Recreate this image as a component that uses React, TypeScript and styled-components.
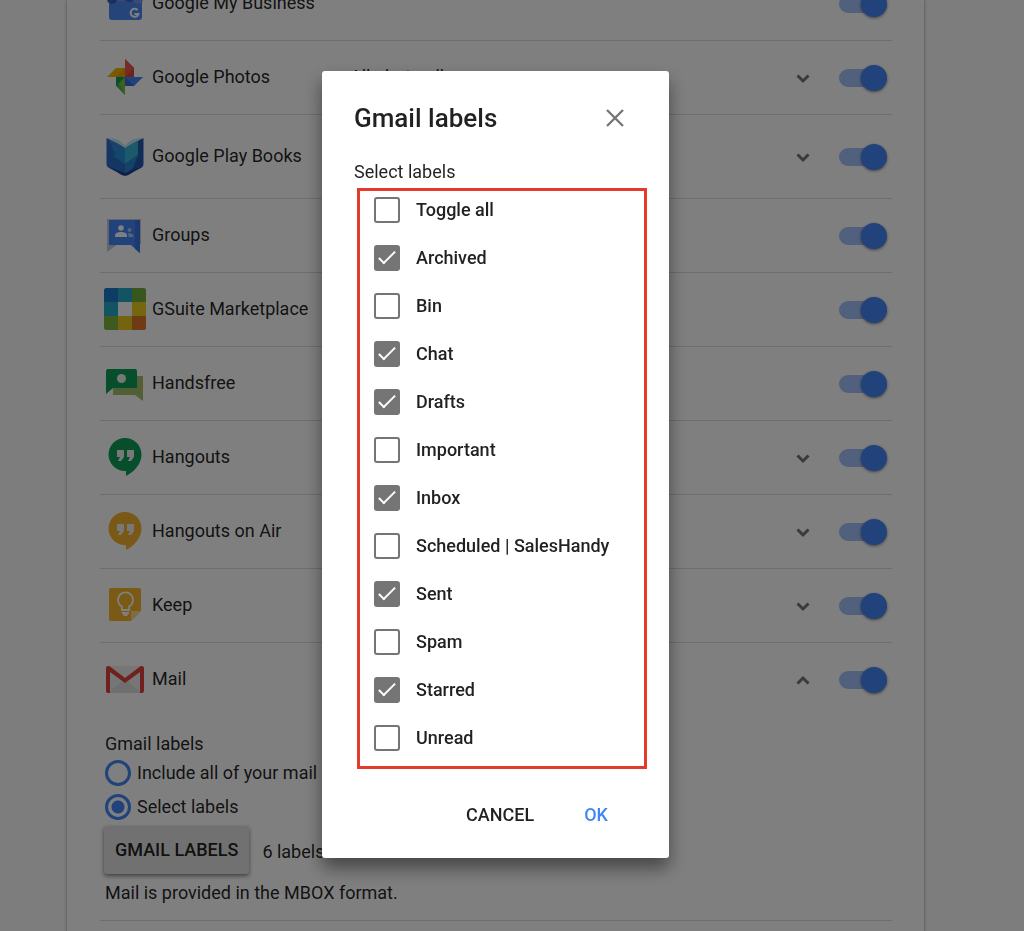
import React from 'react';
import styled, { createGlobalStyle, css } from 'styled-components';

const GlobalStyle = createGlobalStyle`
  *, *::before, *::after { box-sizing: border-box; }
  html, body { margin: 0; height: 100%; }
  body {
    background: #fafafa;
    color: rgba(0, 0, 0, 0.87);
    font-family: Roboto, 'Liberation Sans', sans-serif;
    font-size: 18px;
    line-height: 24px;
  }
  button, input { font: inherit; color: inherit; }
`;

const Page = styled.div`
  height: 100vh;
  overflow: hidden;
  padding-right: 33px;
`;

const Card = styled.main`
  display: flow-root;
  max-width: 857px;
  min-height: 110%;
  margin: 0 auto;
  padding: 0 32px 0 33px;
  background: #fff;
  box-shadow: 0 0 3px rgba(0, 0, 0, 0.4);
`;

/* The list is shown scrolled part-way into its first entry. */
const ProductList = styled.ul`
  list-style: none;
  margin: -33px 0 0;
  padding: 0;
`;

const ProductItem = styled.li`
  border-bottom: 1px solid #dcdcdc;
`;

const ProductRow = styled.div<{ $tall?: boolean }>`
  display: flex;
  align-items: center;
  height: ${(p) => (p.$tall ? 83 : 73)}px;
  padding: 0 5px 2px 4px;
`;

const Logo = styled.svg`
  width: 42px;
  height: 42px;
  margin-right: 6px;
  flex: none;
`;

const Name = styled.span`
  width: 198px;
  flex: none;
`;

const Summary = styled.span`
  flex: 1;
`;

const Expander = styled.button`
  display: flex;
  padding: 2px 0 0;
  border: 0;
  background: none;
  color: #757575;
  margin-right: 24px;
  svg { width: 24px; height: 24px; }
`;

const Switch = styled.input`
  appearance: none;
  position: relative;
  flex: none;
  width: 48px;
  height: 26px;
  margin: 2px 0 0;
  &::before {
    content: '';
    position: absolute;
    left: 0;
    top: 4px;
    width: 46px;
    height: 18px;
    border-radius: 9px;
    background: #a1c0fa;
  }
  &::after {
    content: '';
    position: absolute;
    right: 0;
    top: 0;
    width: 26px;
    height: 26px;
    border-radius: 50%;
    background: #4285f4;
    box-shadow: 0 1px 3px rgba(0, 0, 0, 0.5);
  }
`;

const Details = styled.section`
  padding: 16px 5px 15px;
`;

const Fieldset = styled.fieldset`
  border: 0;
  margin: 0;
  padding: 0;
`;

const Legend = styled.legend`
  padding: 0;
`;

const RadioLabel = styled.label`
  display: flex;
  align-items: center;
  gap: 6px;
  height: 34px;
`;

const Radio = styled.input`
  appearance: none;
  flex: none;
  width: 26px;
  height: 26px;
  margin: 0;
  border: 3px solid #4285f4;
  border-radius: 50%;
  &:checked {
    background: radial-gradient(circle, #4285f4 6px, transparent 7px);
  }
`;

const ButtonLine = styled.div`
  display: flex;
  align-items: center;
  gap: 13px;
  margin: 2px 0 7px;
`;

const RaisedButton = styled.button`
  height: 48px;
  padding: 0 11px;
  margin-left: -1px;
  border: 0;
  border-radius: 3px;
  background: #e3e3e3;
  font-weight: 500;
  box-shadow: 0 2px 4px rgba(0, 0, 0, 0.5);
`;

const Count = styled.span`
  padding-top: 4px;
`;

const Note = styled.p`
  margin: 0;
`;

const Scrim = styled.div`
  position: fixed;
  inset: 0;
  display: flex;
  align-items: center;
  justify-content: center;
  padding: 0 33px 2px 0;
  background: rgba(0, 0, 0, 0.5);
`;

const Dialog = styled.div`
  width: 347px;
  padding: 32px 32px 25px;
  border-radius: 3px;
  background: #fff;
  box-shadow: 0 10px 18px rgba(0, 0, 0, 0.45);
`;

const DialogHeader = styled.header`
  display: flex;
  align-items: center;
  justify-content: space-between;
  height: 30px;
  padding-right: 10px;
  margin-bottom: 27px;
`;

const Title = styled.h2`
  margin: 0;
  font-size: 26px;
  line-height: 30px;
  font-weight: 500;
`;

const CloseButton = styled.button`
  display: flex;
  padding: 0;
  border: 0;
  background: none;
  color: #757575;
  svg { width: 24px; height: 24px; }
`;

const LabelBox = styled.div`
  display: flex;
  flex-direction: column;
  gap: 22px;
  margin: 4px -10px 0 3px;
  padding: 6px 14px 15px;
  border: 3px solid #e5392c;
`;

const CheckLabel = styled.label`
  display: flex;
  align-items: center;
  gap: 16px;
  height: 26px;
  font-weight: 500;
`;

const tick = css`
  &:checked { background: #757575; }
  &:checked::after {
    content: '';
    position: absolute;
    left: 7px;
    top: 0;
    width: 8px;
    height: 17px;
    border: solid #fff;
    border-width: 0 2px 2px 0;
    transform: rotate(45deg);
  }
`;

const Checkbox = styled.input`
  appearance: none;
  position: relative;
  flex: none;
  width: 26px;
  height: 26px;
  margin: 0;
  border: 2px solid #757575;
  border-radius: 3px;
  ${tick}
`;

const Actions = styled.footer`
  display: flex;
  justify-content: flex-end;
  gap: 26px;
  padding: 28px 17px 0 0;
`;

const FlatButton = styled.button<{ $primary?: boolean }>`
  height: 36px;
  padding: 0 12px;
  border: 0;
  background: none;
  font-weight: 500;
  color: ${(p) => (p.$primary ? '#4285f4' : 'inherit')};
`;

type LogoName =
  | 'business' | 'photos' | 'books' | 'groups' | 'market'
  | 'handsfree' | 'hangouts' | 'air' | 'keep' | 'mail';

const bubble = (fill: string) => (
  <>
    <path d="M21 2a16.500 16.500 0 0 0 0 33h1v5c8-4 15.500-12 15.500-21.500A16.500 16.500 0 0 0 21 2z" fill={fill} />
    <path d="M13 14h7v7l-3 4h-3l2-4h-3zM23 14h7v7l-3 4h-3l2-4h-3z" fill="#f1f1f1" />
  </>
);

const logos: Record<LogoName, React.ReactNode> = {
  business: (
    <>
      <path d="M5 14h33v21a3 3 0 0 1-3 3H8a3 3 0 0 1-3-3z" fill="#4989f5" />
      <path d="M4 6h9v11a5 5 0 0 1-10 0z" fill="#3a5fc0" />
      <path d="M12 6h9v11a5 5 0 0 1-9 0z" fill="#7a94e0" />
      <path d="M21 6h9v11a5 5 0 0 1-9 0z" fill="#3a5fc0" />
      <path d="M29 6h9l1 11a5 5 0 0 1-10 0z" fill="#7a94e0" />
      <path d="M33.500 28a4 4 0 1 0 1 4h-4" fill="none" stroke="#fff" strokeWidth="2" />
    </>
  ),
  photos: (
    <>
      <path d="M21 3v18h9V12z" fill="#db4437" />
      <path d="M21 3v18l9-9z" fill="#ea5a4e" />
      <path d="M21 21h18l-9 9h-9z" fill="#4285f4" />
      <path d="M21 21l9 9h-9z" fill="#3367d6" />
      <path d="M21 21v18l-9-9v-9z" fill="#4caf50" />
      <path d="M12 21h9v18z" fill="#7bc043" />
      <path d="M12 21h9l-9 9z" fill="#0f9d58" />
      <path d="M21 21H3l9-9h9z" fill="#f4b400" />
      <path d="M21 21v-9l-9 9z" fill="#e8a000" />
    </>
  ),
  books: (
    <>
      <path d="M2.500 3L21 12v29L6 33.500C4 32.500 2.500 31 2.500 29z" fill="#2b6cc4" />
      <path d="M39.500 3L21 12v29l15-7.500c2-1 3.500-2.500 3.500-4.500z" fill="#2458b0" />
      <path d="M5 5l16 6-9 10z" fill="#2f86d8" />
      <path d="M21 11l13-5v14l-13 9z" fill="#36b4d4" />
      <path d="M21 11v18l-12-8z" fill="#2490d8" />
      <path d="M21 29l13-9-5 13-8 6z" fill="#2b86cf" />
      <path d="M3 3c8-.5 14 2.500 18 8 4-5.500 10-8.500 18-8l-10 5-8 5-8-5z" fill="#bfe6f2" />
      <path d="M5 32l11 7c3 2 7 2 10 0l11-7-16 6z" fill="#1c3f90" />
    </>
  ),
  groups: (
    <>
      <path d="M3 5h34v25H14L3 38z" fill="#c5c8d6" />
      <path d="M5 6h31v33l-9-8H5z" fill="#4285f4" />
      <path d="M31 6h5v33l-5-4z" fill="#3a75e0" />
      <circle cx="17" cy="14" r="2.800" fill="#fff" />
      <path d="M11 23v-1.500C11 19 14 18 17 18s6 1 6 3.500V23z" fill="#fff" />
      <circle cx="25.500" cy="16" r="2" fill="#a9c7fa" />
      <path d="M24.500 23v-2l-1-1.500c3-.700 6 .5 6 2.500v1z" fill="#a9c7fa" />
    </>
  ),
  market: (
    <>
      <rect x="0" y="0" width="42" height="42" rx="3" fill="#24a8c8" />
      <path d="M3 0h11v14H0V3a3 3 0 0 1 3-3z" fill="#1b78c8" />
      <path d="M28 0h11a3 3 0 0 1 3 3v11H28z" fill="#6fae3c" />
      <path d="M28 14h14v14H28z" fill="#e8cf20" />
      <path d="M28 28h14v11a3 3 0 0 1-3 3H28z" fill="#e07428" />
      <path d="M14 28h14v14H14z" fill="#eac81e" />
      <path d="M0 28h14v14H3a3 3 0 0 1-3-3z" fill="#7fb53c" />
      <rect x="14" y="14" width="14" height="14" fill="#fff" />
    </>
  ),
  handsfree: (
    <>
      <path d="M9 14h30v25l-8-6H9z" fill="#a5bd68" />
      <path d="M4 7h27a2 2 0 0 1 2 2v17H9l-7 6V9a2 2 0 0 1 2-2z" fill="#0f9d58" />
      <circle cx="17.500" cy="16.500" r="4.500" fill="#eef3ee" />
    </>
  ),
  hangouts: bubble('#0f9d58'),
  air: bubble('#f4b02a'),
  keep: (
    <>
      <path d="M7 4h28a2 2 0 0 1 2 2v21L27 37H7a2 2 0 0 1-2-2V6a2 2 0 0 1 2-2z" fill="#f4b42a" />
      <path d="M27 37V27h10z" fill="#fbd98b" />
      <path d="M18 26v-3.500a7.500 7.500 0 1 1 7 0V26z" fill="none" stroke="#fff" strokeWidth="1.800" />
      <path d="M18 28h7v2h-1.500v2h-4v-2H18z" fill="#fff" />
    </>
  ),
  mail: (
    <>
      <path d="M4 8h34v27H4z" fill="#ececec" />
      <path d="M4 35l17-14 17 14z" fill="#dedede" />
      <path d="M2 10.500C2 8 4 7.500 6 8.500l15 11.500 15-11.500c2-1 4-.5 4 2V33a2 2 0 0 1-2 2h-2V14L21 25 6 14v21H4a2 2 0 0 1-2-2z" fill="#e0433a" />
    </>
  ),
};

interface Product {
  logo: LogoName;
  name: string;
  tall?: boolean;
  summary?: string;
  expand?: 'open' | 'closed';
}

const products: Product[] = [
  { logo: 'business', name: 'Google My Business' },
  { logo: 'photos', name: 'Google Photos', summary: 'All photo albums', expand: 'closed' },
  { logo: 'books', name: 'Google Play Books', tall: true, expand: 'closed' },
  { logo: 'groups', name: 'Groups' },
  { logo: 'market', name: 'GSuite Marketplace' },
  { logo: 'handsfree', name: 'Handsfree' },
  { logo: 'hangouts', name: 'Hangouts', expand: 'closed' },
  { logo: 'air', name: 'Hangouts on Air', expand: 'closed' },
  { logo: 'keep', name: 'Keep', expand: 'closed' },
  { logo: 'mail', name: 'Mail', expand: 'open' },
];

const labels: [string, boolean][] = [
  ['Toggle all', false],
  ['Archived', true],
  ['Bin', false],
  ['Chat', true],
  ['Drafts', true],
  ['Important', false],
  ['Inbox', true],
  ['Scheduled | SalesHandy', false],
  ['Sent', true],
  ['Spam', false],
  ['Starred', true],
  ['Unread', false],
];

const Chevron = ({ up }: { up?: boolean }) => (
  <svg viewBox="0 0 24 24" fill="none" stroke="currentColor" strokeWidth="3">
    <path d={up ? 'M6.500 15.500l5.500-5.500 5.500 5.500' : 'M6.500 9.500l5.500 5.500 5.500-5.500'} />
  </svg>
);

const MailDetails = () => (
  <Details>
    <Fieldset>
      <Legend>Gmail labels</Legend>
      <RadioLabel>
        <Radio type="radio" name="scope" />
        Include all of your mail
      </RadioLabel>
      <RadioLabel>
        <Radio type="radio" name="scope" defaultChecked />
        Select labels
      </RadioLabel>
    </Fieldset>
    <ButtonLine>
      <RaisedButton type="button">GMAIL LABELS</RaisedButton>
      <Count>6 labels</Count>
    </ButtonLine>
    <Note>Mail is provided in the MBOX format.</Note>
  </Details>
);

export default function App() {
  return (
    <>
      <GlobalStyle />
      <Page>
        <Card>
          <ProductList>
            {products.map((p) => (
              <ProductItem key={p.name}>
                <ProductRow $tall={p.tall}>
                  <Logo viewBox="0 0 42 42" aria-hidden="true">{logos[p.logo]}</Logo>
                  <Name>{p.name}</Name>
                  <Summary>{p.summary}</Summary>
                  {p.expand && (
                    <Expander type="button" aria-label={`Options for ${p.name}`}>
                      <Chevron up={p.expand === 'open'} />
                    </Expander>
                  )}
                  <Switch type="checkbox" role="switch" aria-label={p.name} defaultChecked />
                </ProductRow>
                {p.expand === 'open' && <MailDetails />}
              </ProductItem>
            ))}
          </ProductList>
        </Card>
      </Page>
      <Scrim>
        <Dialog role="dialog" aria-modal="true" aria-labelledby="dialog-title">
          <DialogHeader>
            <Title id="dialog-title">Gmail labels</Title>
            <CloseButton type="button" aria-label="Close">
              <svg viewBox="0 0 24 24" fill="none" stroke="currentColor" strokeWidth="2.300">
                <path d="M4 4l16 16M20 4L4 20" />
              </svg>
            </CloseButton>
          </DialogHeader>
          <Note>Select labels</Note>
          <LabelBox>
            {labels.map(([text, checked]) => (
              <CheckLabel key={text}>
                <Checkbox type="checkbox" defaultChecked={checked} />
                {text}
              </CheckLabel>
            ))}
          </LabelBox>
          <Actions>
            <FlatButton type="button">CANCEL</FlatButton>
            <FlatButton type="button" $primary>OK</FlatButton>
          </Actions>
        </Dialog>
      </Scrim>
    </>
  );
}
